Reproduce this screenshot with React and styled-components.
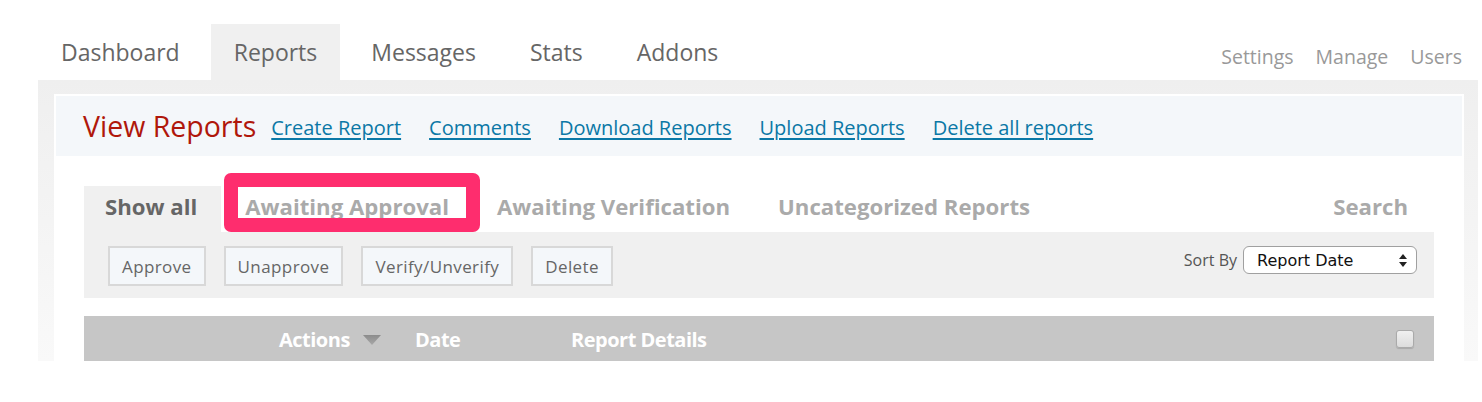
import React, { useState } from 'react';
import styled, { createGlobalStyle } from 'styled-components';

const GlobalStyle = createGlobalStyle`
    body {
        margin: 0;
        background: #fff;
        font-family: "Open Sans", "DejaVu Sans", sans-serif;
    }
`;

const mainTabs = ['Dashboard', 'Reports', 'Messages', 'Stats', 'Addons'];
const utilLinks = ['Settings', 'Manage', 'Users'];
const headerLinks = ['Create Report', 'Comments', 'Download Reports', 'Upload Reports', 'Delete all reports'];
const subTabs = ['Show all', 'Awaiting Approval', 'Awaiting Verification', 'Uncategorized Reports'];
const actions = ['Approve', 'Unapprove', 'Verify/Unverify', 'Delete'];

const App = () => {
    const [tab] = useState('Reports');
    const [filter] = useState('Show all');

    return (
        <Page>
            <GlobalStyle />
            <TopBar>
                <MainTabs>
                    {mainTabs.map(t => (
                        <MainTab key={t} active={t === tab}>{t}</MainTab>
                    ))}
                </MainTabs>
                <UtilLinks>
                    {utilLinks.map(l => <UtilLink key={l}>{l}</UtilLink>)}
                </UtilLinks>
            </TopBar>
            <Panel>
                <Inner>
                    <HeaderBand>
                        <Title>View Reports</Title>
                        <HeaderLinks>
                            {headerLinks.map(l => <HeaderLink key={l} href="#">{l}</HeaderLink>)}
                        </HeaderLinks>
                    </HeaderBand>
                    <Content>
                        <SubTabs>
                            {subTabs.map(t => (
                                <SubTab key={t} active={t === filter}>
                                    {t}
                                    {t === 'Awaiting Approval' && <Highlight />}
                                </SubTab>
                            ))}
                            <SearchTab>Search</SearchTab>
                        </SubTabs>
                        <Toolbar>
                            <Buttons>
                                {actions.map(a => <ActionButton key={a}>{a}</ActionButton>)}
                            </Buttons>
                            <SortBox>
                                <SortLabel>Sort By</SortLabel>
                                <Select>
                                    <span>Report Date</span>
                                    <svg width="8" height="13" viewBox="0 0 8 13">
                                        <polygon points="4,0 8,5 0,5" fill="#222" />
                                        <polygon points="0,8 8,8 4,13" fill="#222" />
                                    </svg>
                                </Select>
                            </SortBox>
                        </Toolbar>
                        <TableHead>
                            <HeadCell width={195} />
                            <HeadCell width={136}>
                                Actions
                                <svg width="18" height="10" viewBox="0 0 18 10">
                                    <defs>
                                        <linearGradient id="tri" x1="0" y1="0" x2="0" y2="1">
                                            <stop offset="0" stopColor="#8c8c8c" />
                                            <stop offset="1" stopColor="#a8a8a8" />
                                        </linearGradient>
                                    </defs>
                                    <polygon points="0,0 18,0 9,10" fill="url(#tri)" />
                                </svg>
                            </HeadCell>
                            <HeadCell width={156}>Date</HeadCell>
                            <HeadCell grow>Report Details</HeadCell>
                            <CheckBox />
                        </TableHead>
                    </Content>
                </Inner>
            </Panel>
        </Page>
    );
};

export default App;

const Page = styled.div`
    width: 1440px;
    padding: 24px 0 0 38px;
`;

const TopBar = styled.div`
    display: flex;
    justify-content: space-between;
    align-items: stretch;
    height: 56px;
`;

const MainTabs = styled.div`
    display: flex;
    gap: 8px;
`;

const MainTab = styled.div`
    display: flex;
    align-items: center;
    padding: 0 23px;
    font-size: 23px;
    color: #666;
    background: ${p => (p.active ? '#f0f0f0' : 'transparent')};
`;

const UtilLinks = styled.div`
    display: flex;
    align-items: flex-end;
    gap: 22px;
    padding: 0 16px 10px 0;
`;

const UtilLink = styled.span`
    font-size: 19.5px;
    color: #999;
`;

const Panel = styled.div`
    box-sizing: border-box;
    height: 281px;
    padding: 14px 14px 0 16px;
    background: linear-gradient(#efefef, #f9f9f9);
`;

const Inner = styled.div`
    box-sizing: border-box;
    height: 100%;
    padding: 2px 2px 0;
    background: #fff;
`;

const HeaderBand = styled.div`
    display: flex;
    align-items: center;
    height: 60px;
    padding-left: 27px;
    background: #f4f7fa;
`;

const Title = styled.h1`
    margin: 0 15px 0 0;
    font-size: 28.5px;
    font-weight: normal;
    color: #b0170b;
`;

const HeaderLinks = styled.div`
    display: flex;
    gap: 28px;
    padding-top: 3px;
`;

const HeaderLink = styled.a`
    font-size: 20px;
    color: #0b78a6;
    text-decoration: underline;
    text-underline-offset: 3px;
`;

const Content = styled.div`
    padding: 30px 28px 0;
`;

const SubTabs = styled.div`
    display: flex;
    height: 46px;
`;

const SubTab = styled.div`
    position: relative;
    display: flex;
    align-items: center;
    padding: 0 24px 5px ${p => (p.active ? '21px' : '24px')};
    font-size: 22.2px;
    font-weight: bold;
    color: ${p => (p.active ? '#666' : '#aaa')};
    background: ${p => (p.active ? '#f0f0f0' : 'transparent')};
`;

const SearchTab = styled(SubTab)`
    margin-left: auto;
    padding-right: 26px;
`;

const Highlight = styled.div`
    position: absolute;
    left: 3px;
    top: -13px;
    width: 256px;
    height: 59px;
    box-sizing: border-box;
    border: 14px solid #fe2d6e;
    border-radius: 7px;
`;

const Toolbar = styled.div`
    display: flex;
    align-items: center;
    justify-content: space-between;
    height: 66px;
    padding: 0 17px 0 24px;
    background: #f0f0f0;
`;

const Buttons = styled.div`
    display: flex;
    gap: 18px;
    padding-top: 2px;
`;

const ActionButton = styled.button`
    height: 40px;
    padding: 0 12px;
    border: 2px solid #d8d8d8;
    background: #f4f7fa;
    font-family: inherit;
    font-size: 17px;
    letter-spacing: 0.4px;
    color: #666;
`;

const SortBox = styled.div`
    display: flex;
    align-items: center;
    gap: 6px;
    margin-top: -10px;
`;

const SortLabel = styled.span`
    font-size: 16px;
    color: #555;
`;

const Select = styled.div`
    display: flex;
    align-items: center;
    justify-content: space-between;
    box-sizing: border-box;
    width: 174px;
    height: 28px;
    padding: 0 9px 0 13px;
    border: 1px solid #a0a0a0;
    border-radius: 6px;
    background: #fff;
    font-family: "DejaVu Sans", sans-serif;
    font-size: 16px;
    color: #111;
`;

const TableHead = styled.div`
    display: flex;
    align-items: center;
    height: 45px;
    margin-top: 18px;
    padding-right: 20px;
    background: #c6c6c6;
`;

const HeadCell = styled.div`
    display: flex;
    align-items: center;
    gap: 13px;
    width: ${p => (p.width ? `${p.width}px` : 'auto')};
    flex: ${p => (p.grow ? 1 : 'none')};
    padding-top: 2px;
    font-size: 20px;
    font-weight: bold;
    letter-spacing: -0.5px;
    color: #fff;
`;

const CheckBox = styled.div`
    width: 18px;
    height: 18px;
    box-sizing: border-box;
    border: 1px solid #aaa;
    border-radius: 3px;
    background: linear-gradient(#f0f0f0, #dcdcdc);
    box-shadow: 0 1px 1px rgba(0, 0, 0, 0.15);
`;
